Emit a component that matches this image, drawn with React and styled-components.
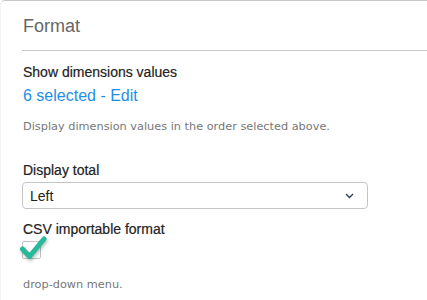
import React, { useState } from "react";
import styled, { createGlobalStyle } from "styled-components";

const GlobalStyle = createGlobalStyle`
  html, body {
    margin: 0;
    padding: 0;
    background: #ffffff;
  }
  body {
    font-family: "Liberation Sans", Arial, sans-serif;
  }
`;

const Panel = styled.section`
  width: 427px;
  height: 300px;
  box-sizing: border-box;
  border-top: 1px solid #c8c8c8;
  border-left: 1px solid #f2f2f2;
  border-top-left-radius: 5px;
  padding: 0 0 0 21px;
  overflow: hidden;
`;

const Title = styled.h4`
  margin: 0;
  padding: 15px 0 0 1px;
  height: 50px;
  box-sizing: border-box;
  font-size: 18px;
  font-weight: normal;
  color: #666666;
  border-bottom: 1px solid #c8c8c8;
`;

const Field = styled.div`
  display: flex;
  flex-direction: column;
  align-items: flex-start;
  margin-top: ${({ top }) => top || 0}px;
`;

const Label = styled.label`
  font-size: 14px;
  color: #222222;
  padding-left: 1px;
  line-height: 16px;
  -webkit-text-stroke: 0.2px #222222;
`;

const EditLink = styled.a`
  font-size: 16px;
  color: #1e8fe6;
  text-decoration: none;
  padding-left: 1px;
  margin-top: 7px;
  line-height: 18px;
  cursor: pointer;
`;

const Hint = styled.p`
  margin: ${({ top }) => top || 0}px 0 0 1px;
  font-family: "DejaVu Sans", Verdana, sans-serif;
  font-size: 11.3px;
  color: #777777;
  line-height: 13px;
`;

const SelectBox = styled.div`
  margin-top: 4px;
  width: 346px;
  height: 27px;
  box-sizing: border-box;
  border: 1px solid #c4c4c4;
  border-radius: 4px;
  display: flex;
  align-items: center;
  justify-content: space-between;
  padding: 0 13px 0 7px;
  font-size: 14px;
  color: #222222;
`;

const CheckWrap = styled.div`
  position: relative;
  margin-top: 4px;
  width: 19px;
  height: 18px;
  border: 1px solid #c4c4c4;
  border-radius: 2px;
  box-sizing: border-box;
`;

const CheckMark = styled.svg`
  position: absolute;
  left: -4px;
  top: -7px;
  overflow: visible;
  filter: drop-shadow(1px 2px 1.5px rgba(0, 0, 0, 0.25));
`;

const Chevron = () => (
  <svg width="9" height="6" viewBox="0 0 9 6">
    <path d="M1 1 L4.5 4.5 L8 1" fill="none" stroke="#2a3f5a" strokeWidth="1.4" />
  </svg>
);

export default function App() {
  const [checked] = useState(true);
  return (
    <>
      <GlobalStyle />
      <Panel>
        <Title>Format</Title>
        <Field top={13}>
          <Label>Show dimensions values</Label>
          <EditLink>6 selected - Edit</EditLink>
        </Field>
        <Hint top={15}>Display dimension values in the order selected above.</Hint>
        <Field top={29}>
          <Label>Display total</Label>
          <SelectBox>
            <span>Left</span>
            <Chevron />
          </SelectBox>
        </Field>
        <Field top={12}>
          <Label>CSV importable format</Label>
          <CheckWrap>
            {checked && (
              <CheckMark width="30" height="28" viewBox="0 0 30 28">
                <path
                  d="M3.5 14 L10.5 21.5 L25 4"
                  fill="none"
                  stroke="#26b99a"
                  strokeWidth="5"
                  strokeLinecap="round"
                  strokeLinejoin="round"
                />
              </CheckMark>
            )}
          </CheckWrap>
        </Field>
        <Hint top={19}>drop-down menu.</Hint>
      </Panel>
    </>
  );
}
